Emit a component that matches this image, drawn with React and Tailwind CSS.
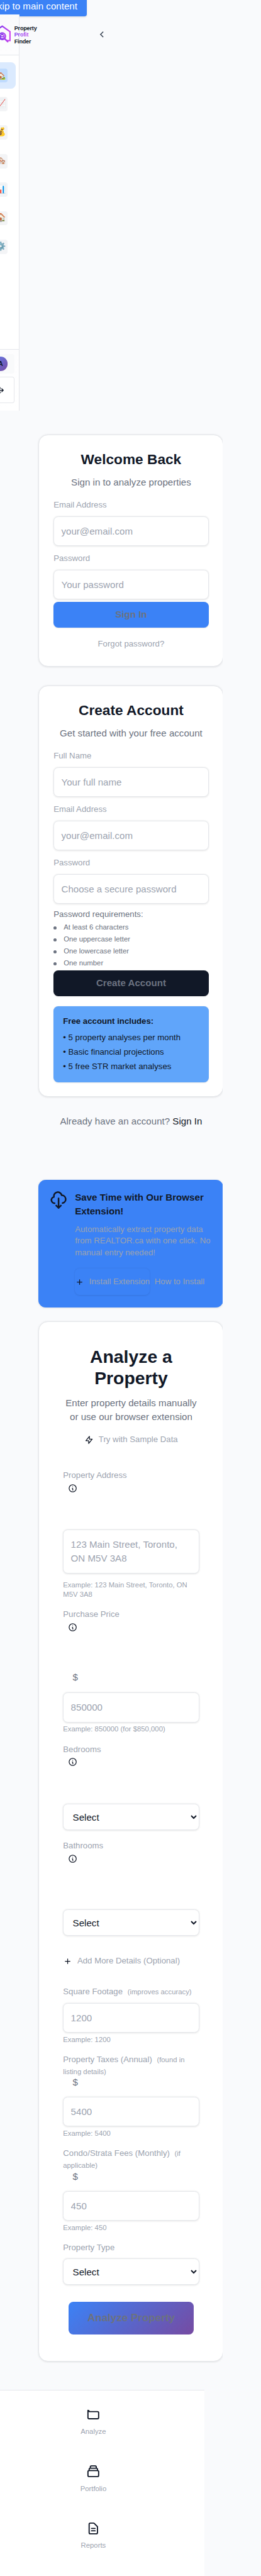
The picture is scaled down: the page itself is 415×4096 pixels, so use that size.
import React from "react";

function Icon({ d, className, width = 2 }) {
  return (
    <svg viewBox="0 0 24 24" fill="none" stroke="currentColor" strokeWidth={width} strokeLinecap="round" strokeLinejoin="round" className={className}>
      <path d={d} />
    </svg>
  );
}

const paths = {
  plus: "M12 6v6m0 0v6m0-6h6m-6 0H6",
  bolt: "M13 10V3L4 14h7v7l9-11h-7z",
  info: "M13 16h-1v-4h-1m1-4h.01M21 12a9 9 0 11-18 0 9 9 0 0118 0z",
  cloud: "M7 16a4 4 0 01-.88-7.903A5 5 0 1115.9 6L16 6a5 5 0 011 9.9M9 19l3 3m0 0l3-3m-3 3V10",
  analyze: "M3 7v10a2 2 0 002 2h14a2 2 0 002-2V9a2 2 0 00-2-2H5a2 2 0 00-2-2z",
  portfolio:
    "M19 11H5m14 0a2 2 0 012 2v6a2 2 0 01-2 2H5a2 2 0 01-2-2v-6a2 2 0 012-2m14 0V9a2 2 0 00-2-2M5 11V9a2 2 0 012-2m0 0V5a2 2 0 012-2h6a2 2 0 012 2v2M7 7h10",
  reports:
    "M9 12h6m-6 4h6m2 5H7a2 2 0 01-2-2V5a2 2 0 012-2h5.586a1 1 0 01.707.293l5.414 5.414a1 1 0 01.293.707V19a2 2 0 01-2 2z",
  logout: "M17 16l4-4m0 0l-4-4m4 4H7m6 4v1a3 3 0 01-3 3H6a3 3 0 01-3-3V7a3 3 0 013-3h4a3 3 0 013 3v1",
};

const fieldBox =
  "block w-full rounded-lg border border-[#e5e7eb] bg-white text-base leading-6 shadow-[0_1px_3px_rgba(0,0,0,0.1)] placeholder:text-[#9ca3af] placeholder:opacity-100";

function Label({ children, note }) {
  return (
    <div className="whitespace-nowrap text-sm leading-5 text-[#9ca3af]">
      {children}
      {note && <span className="ml-2 text-xs leading-5">{note}</span>}
    </div>
  );
}

function Input({ placeholder, className = "" }) {
  return <input placeholder={placeholder} className={`${fieldBox} h-[50px] px-3 py-3 ${className}`} />;
}

function Field({ label, placeholder }) {
  return (
    <div className="flex h-[78px] flex-col gap-2">
      <Label>{label}</Label>
      <Input placeholder={placeholder} />
    </div>
  );
}

function Select({ className = "" }) {
  return (
    <select className={`${fieldBox} h-[44.5px] px-3 text-[#111827] ${className}`}>
      <option>Select</option>
    </select>
  );
}

function InfoMark() {
  return (
    <div className="mt-[3px] ml-2 h-4 w-4 text-[#111827]">
      <Icon d={paths.info} className="h-4 w-4" />
    </div>
  );
}

function Example({ children }) {
  return <p className="mt-1 whitespace-nowrap text-xs leading-4 text-[#9ca3af]">{children}</p>;
}

const card = "w-[311px] shrink-0 rounded-2xl border border-[#e5e7eb] bg-white shadow-[0_1px_3px_rgba(0,0,0,0.1)]";

function Logo() {
  return (
    <svg viewBox="0 0 32 32" className="-ml-[13px] h-8 w-8 shrink-0" fill="none">
      <defs>
        <linearGradient id="logo" x1="0" y1="0" x2="32" y2="0" gradientUnits="userSpaceOnUse">
          <stop offset="0.35" stopColor="#7c3aed" />
          <stop offset="1" stopColor="#d946ef" />
        </linearGradient>
      </defs>
      <g stroke="url(#logo)" strokeWidth="2.300">
        <path d="M8 27H3.500V12L16.500 2.800L29.500 12V27H23" />
        <circle cx="16.500" cy="19.700" r="5.500" />
        <path d="M20.500 23.800L26.500 29.500" strokeWidth="2.600" />
        <path d="M13.500 23.500V18.500L16.500 16L19.500 18.500V23.500ZM13.500 20.500H19" strokeWidth="1.700" />
      </g>
    </svg>
  );
}

function NavItem({ emoji, active }) {
  return (
    <div className={active ? "flex h-11 w-[26px] items-center rounded-r-lg bg-[#dbeafe]" : "flex h-11 w-[26px] items-center rounded-r-lg"}>
      <div
        className={
          active
            ? "-ml-[11px] flex h-6 w-6 shrink-0 items-center justify-center rounded bg-[#bfdbfe] text-sm"
            : "-ml-[11px] flex h-6 w-6 shrink-0 items-center justify-center rounded bg-[#f3f4f6] text-sm"
        }
      >
        {emoji}
      </div>
    </div>
  );
}

function Sidebar() {
  return (
    <aside className="relative flex h-[667px] w-[33px] flex-col border-r border-[#e5e7eb] bg-white">
      <div className="flex h-[69px] shrink-0 border-b border-[#e5e7eb] bg-gradient-to-b from-[#f9fafb] to-[#fdfdfe] pt-[17px]">
        <Logo />
        <div className="mt-px ml-[5px] shrink-0 text-[9.6px] leading-[11px] font-bold tracking-[-0.02em] text-[#111827]">
          <div>Property</div>
          <div className="bg-gradient-to-r from-[#7c3aed] to-[#d946ef] bg-clip-text text-transparent">Profit</div>
          <div>Finder</div>
        </div>
        <svg viewBox="0 0 8 12" className="mt-[11px] ml-[105px] h-3 w-2 shrink-0 text-[#374151]" fill="none" stroke="currentColor" strokeWidth="1.600">
          <path d="M6.500 1.500L2 6L6.500 10.500" />
        </svg>
      </div>
      <nav className="mt-3 flex flex-col gap-1">
        <NavItem emoji="🏡" active />
        <NavItem emoji="📈" />
        <NavItem emoji="💰" />
        <NavItem emoji="🏘️" />
        <NavItem emoji="📊" />
        <NavItem emoji="🏠" />
        <NavItem emoji="⚙️" />
      </nav>
      <div className="mt-auto flex h-[104px] flex-col border-t-2 border-[#e5e7eb] bg-gradient-to-b from-[#fdfdfe] to-white pt-2">
        <div className="flex h-8 w-6 items-center rounded-r bg-[#f9fafb]">
          <div className="-ml-[11px] flex h-6 w-6 shrink-0 items-center justify-center rounded-full bg-[linear-gradient(135deg,#667eea,#764ba2)] text-[11px] font-bold text-[#111827]">A</div>
        </div>
        <div className="mt-1.5 flex h-11 w-6 items-center rounded-r border border-l-0 border-[#e5e7eb] bg-white">
          <Icon d={paths.logout} className="-ml-2 h-4 w-4 shrink-0 text-[#111827]" />
        </div>
      </div>
    </aside>
  );
}

function SignIn() {
  return (
    <section className={`${card} h-[390px] p-6 text-center`}>
      <h2 className="text-2xl leading-8 font-bold text-[#111827]">Welcome Back</h2>
      <p className="mt-3 text-base leading-6 text-[#6b7280]">Sign in to analyze properties</p>
      <div className="mt-4 flex flex-col gap-3 text-left">
        <Field label="Email Address" placeholder="your@email.com" />
        <Field label="Password" placeholder="Your password" />
      </div>
      <button className="mt-1 h-11 w-full rounded-lg bg-[#3b82f6] text-base font-semibold text-[#6b7280] shadow-[0_1px_2px_rgba(0,0,0,0.1)]">Sign In</button>
      <p className="mt-4 text-sm leading-6 text-[#9ca3af]">Forgot password?</p>
    </section>
  );
}

const requirements = ["At least 6 characters", "One uppercase letter", "One lowercase letter", "One number"];

function SignUp() {
  return (
    <section className={`${card} mt-8 h-[692px] p-6 text-center`}>
      <h2 className="text-2xl leading-8 font-bold text-[#111827]">Create Account</h2>
      <p className="mt-3 whitespace-nowrap text-base leading-6 text-[#6b7280]">Get started with your free account</p>
      <div className="mt-4 flex flex-col gap-3 text-left">
        <Field label="Full Name" placeholder="Your full name" />
        <Field label="Email Address" placeholder="your@email.com" />
        <Field label="Password" placeholder="Choose a secure password" />
      </div>
      <div className="mt-2 text-left text-[#6b7280]">
        <p className="text-sm leading-5">Password requirements:</p>
        <ul className="mt-1 flex flex-col gap-1 text-xs leading-4">
          {requirements.map((r) => (
            <li key={r} className="flex items-center gap-3">
              <span className="mt-0.5 h-[5px] w-[5px] rounded-full bg-[#6b7280]" />
              {r}
            </li>
          ))}
        </ul>
      </div>
      <button className="mt-1 h-11 w-full rounded-lg bg-[#111827] text-base font-semibold text-[#6b7280] shadow-[0_1px_2px_rgba(0,0,0,0.1)]">Create Account</button>
      <div className="mt-4 h-32 rounded-lg bg-[#60a5fa] p-4 text-left text-sm leading-5 text-[#111827] shadow-[0_1px_2px_rgba(0,0,0,0.1)]">
        <p className="font-semibold">Free account includes:</p>
        <div className="mt-2 flex flex-col gap-1">
          <p>• 5 property analyses per month</p>
          <p>• Basic financial projections</p>
          <p>• 5 free STR market analyses</p>
        </div>
      </div>
    </section>
  );
}

function ExtensionBanner() {
  return (
    <section className="mt-[86px] flex h-[214px] w-[311px] shrink-0 gap-3 rounded-xl border border-[#3b82f6] bg-[#3b82f6] p-4 shadow-[0_1px_3px_rgba(0,0,0,0.1)]">
      <Icon d={paths.cloud} className="h-8 w-8 shrink-0 text-[#111827]" />
      <div className="whitespace-nowrap">
        <h3 className="text-base leading-6 font-semibold text-[#111827]">
          Save Time with Our Browser
          <br />
          Extension!
        </h3>
        <p className="mt-2 text-sm leading-5 text-[#9ca3af]">
          Automatically extract property data
          <br />
          from REALTOR.ca with one click. No
          <br />
          manual entry needed!
        </p>
        <div className="mt-4 flex h-11 items-center gap-2 text-sm text-[#9ca3af]">
          <button className="flex h-11 w-[126px] items-center gap-2 rounded-lg shadow-[0_1px_3px_rgba(0,0,0,0.1)]">
            <Icon d={paths.plus} className="h-4 w-4 shrink-0 text-[#111827]" />
            Install Extension
          </button>
          <span>How to Install</span>
        </div>
      </div>
    </section>
  );
}

function AnalyzeForm() {
  return (
    <section className={`${card} mt-6 h-[1749px] p-10`}>
      <div className="h-[208px] text-center">
        <h1 className="text-3xl leading-9 font-bold text-[#111827]">
          Analyze a
          <br />
          Property
        </h1>
        <p className="mt-3 whitespace-nowrap text-base leading-6 text-[#6b7280]">
          Enter property details manually
          <br />
          or use our browser extension
        </p>
        <div className="mt-4 flex items-center justify-center gap-2 text-sm leading-5 text-[#9ca3af]">
          <Icon d={paths.bolt} className="h-4 w-4 text-[#111827]" />
          Try with Sample Data
        </div>
      </div>

      <div className="h-[234px]">
        <Label>Property Address</Label>
        <InfoMark />
        <textarea rows={2} placeholder="123 Main Street, Toronto, ON M5V 3A8" className={`${fieldBox} mt-[62px] h-[74px] resize-none overflow-hidden px-3 py-3`} />
        <p className="mt-[11px] whitespace-nowrap text-xs leading-4 text-[#9ca3af]">
          Example: 123 Main Street, Toronto, ON
          <br />
          M5V 3A8
        </p>
      </div>

      <div className="h-[227px]">
        <Label>Purchase Price</Label>
        <InfoMark />
        <div className="mt-[65px] ml-4 text-base leading-6 text-[#6b7280]">$</div>
        <Input placeholder="850000" className="mt-[13px]" />
        <Example>Example: 850000 (for $850,000)</Example>
      </div>

      <div className="h-[162px]">
        <Label>Bedrooms</Label>
        <InfoMark />
        <Select className="mt-[62px]" />
      </div>

      <div className="h-[194px]">
        <Label>Bathrooms</Label>
        <InfoMark />
        <Select className="mt-[78px]" />
      </div>

      <div className="flex h-[52px] items-start gap-2 text-sm leading-5 text-[#9ca3af]">
        <Icon d={paths.plus} className="mt-0.5 h-4 w-4 text-[#111827]" />
        Add More Details (Optional)
      </div>

      <div className="h-[114px]">
        <Label note="(improves accuracy)">Square Footage</Label>
        <Input placeholder="1200" className="mt-2" />
        <Example>Example: 1200</Example>
      </div>

      <div className="h-[158px]">
        <Label
          note={
            <>
              (found in
              <br />
              listing details)
            </>
          }
        >
          Property Taxes (Annual)
        </Label>
        <div className="-mt-1 ml-4 text-base leading-6 text-[#6b7280]">$</div>
        <Input placeholder="5400" className="mt-3" />
        <Example>Example: 5400</Example>
      </div>

      <div className="h-[158px]">
        <Label
          note={
            <>
              (if
              <br />
              applicable)
            </>
          }
        >
          Condo/Strata Fees (Monthly)
        </Label>
        <div className="-mt-1 ml-4 text-base leading-6 text-[#6b7280]">$</div>
        <Input placeholder="450" className="mt-3" />
        <Example>Example: 450</Example>
      </div>

      <Label>Property Type</Label>
      <Select className="mt-2" />
      <button className="mx-auto mt-[28px] block h-[55px] w-[211px] rounded-lg bg-[linear-gradient(135deg,#3b82f6,#764ba2)] text-lg font-semibold text-[#6b7280]">
        Analyze Property
      </button>
    </section>
  );
}

function BottomItem({ d, label }) {
  return (
    <div className="flex h-24 flex-col items-center gap-[9px] pt-7">
      <Icon d={d} className="h-6 w-6 text-[#111827]" />
      <span className="text-xs leading-4 text-[#9ca3af]">{label}</span>
    </div>
  );
}

export default function App() {
  return (
    <div className="h-[4096px] w-[415px] overflow-hidden bg-[#f9fafc]">
      <div className="relative flex h-[4333px] w-[439px] flex-col overflow-hidden font-['Liberation_Sans',Arial,sans-serif] [zoom:0.94533]">
        <a className="absolute -top-3 right-[293px] h-10 rounded-b bg-[#3b82f6] px-4 pt-[11px] text-base leading-6 whitespace-nowrap text-white shadow-[0_1px_3px_rgba(0,0,0,0.15)]">
          Skip to main content
        </a>
        <div className="h-[723px] shrink-0 pt-6">
          <Sidebar />
        </div>
        <main className="ml-[49px] flex h-[3297px] w-[326px] shrink-0 flex-col overflow-hidden pt-2 pl-4">
          <SignIn />
          <SignUp />
          <p className="mt-[30px] w-[311px] text-center text-base leading-6 text-[#6b7280]">
            Already have an account? <span className="text-[#111827]">Sign In</span>
          </p>
          <ExtensionBanner />
          <AnalyzeForm />
        </main>
        <nav className="h-[313px] w-[344px] shrink-0 border-t border-[#e5e7eb] bg-white">
          <div className="ml-[62px] w-[190px]">
            <BottomItem d={paths.analyze} label="Analyze" />
            <BottomItem d={paths.portfolio} label="Portfolio" />
            <BottomItem d={paths.reports} label="Reports" />
          </div>
        </nav>
      </div>
    </div>
  );
}
